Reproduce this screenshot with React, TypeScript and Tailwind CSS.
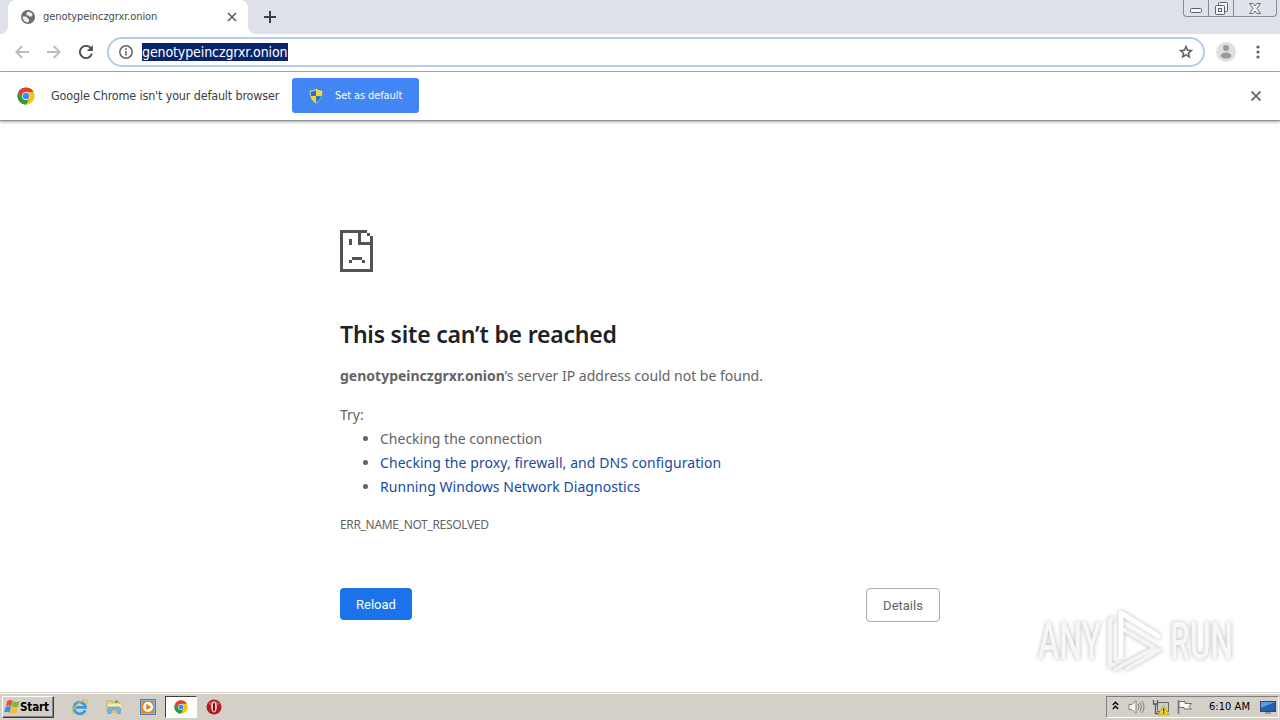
import { ReactNode } from "react"

const SANS = "font-['Noto_Sans','Open_Sans',sans-serif]"
const TAHOMA = "font-['DejaVu_Sans_Condensed','DejaVu_Sans',sans-serif]"

const ChromeLogo = ({ size }: { size: number }) => (
  <svg width={size} height={size} viewBox="0 0 48 48" className="shrink-0">
    <circle cx="24" cy="24" r="23" fill="#fbc116" />
    <path d="M24 13 H44.2 L43.9 12.5 A23 23 0 0 0 4.1 12.5 L14.5 29.5 Z" fill="#e33b2e" />
    <path d="M4.1 12.5 A23 23 0 0 0 24 47 L33.5 29.5 L24 35 L14.5 29.5 Z" fill="#2a9c48" />
    <circle cx="24" cy="24" r="10.5" fill="#fff" />
    <circle cx="24" cy="24" r="8.8" fill="#4688f1" />
  </svg>
)

const Globe = () => (
  <svg width="14" height="14" viewBox="0 0 14 14" className="shrink-0">
    <circle cx="7" cy="7" r="7" fill="#6b6d70" />
    <path d="M1.5 6.6H4.6Q6.4 6.8 6.4 8.6H8V11.2L6.8 12.6Q2 12 1.5 6.6Z" fill="#eeeff0" />
    <path d="M6 2Q9.5 1 11.7 4.3L10.8 6.4H8.2L7.2 5.2H5.4V3.6Z" fill="#eeeff0" />
  </svg>
)

const Shield = () => (
  <svg width="14" height="16" viewBox="0 0 14 16" className="shrink-0">
    <path d="M7 .5Q9.5 2.4 13.5 2.5C13.7 8 12 12.5 7 15.5C2 12.5 .3 8 .5 2.5Q4.5 2.4 7 .5Z" fill="#dfe3d8" stroke="#6c7b80" strokeWidth=".6" />
    <path d="M7 2V8H1.8L1.6 3.6Q4.5 3.5 7 2ZM7 8H12.2C11.5 11 9.8 12.9 7 14.4Z" fill="#2376c9" />
    <path d="M7 2Q9.5 3.5 12.4 3.6L12.2 8H7ZM7 8H1.8C2.5 11 4.2 12.9 7 14.4Z" fill="#f6d52b" />
  </svg>
)

const SadPage = () => (
  <svg width="33" height="42" viewBox="0 0 11 14" shapeRendering="crispEdges" fill="#535353">
    <path d="M0 0H9V1H7V4H10V3H11V14H0ZM1 1V13H10V5H6V1Z" fillRule="evenodd" />
    <path d="M9 1h1v1H9zM10 2h1v2h-1zM3 3h1v2H3zM4 9h3.34v1H4zM3 10h1v1H3zM7.34 10h1v1h-1z" />
  </svg>
)

const TabStrip = () => (
  <div className="flex h-[34px] bg-[#dee1e8]">
    <div className="w-2 bg-white">
      <div className="h-full w-full rounded-br-lg bg-[#dee1e8]" />
    </div>
    <div className="w-60 bg-[#dee1e8]">
      <div className="flex h-full items-center rounded-t-lg bg-white pr-[11px] pl-[13px]">
        <Globe />
        <span className={`${TAHOMA} mt-px ml-2 flex-1 text-[11px] tracking-[-0.08px] whitespace-nowrap text-[#45494d]`}>genotypeinczgrxr.onion</span>
        <svg width="10" height="10" viewBox="0 0 10 10" stroke="#5f6368" strokeWidth="1.7">
          <path d="M1 1L9 9M9 1L1 9" />
        </svg>
      </div>
    </div>
    <div className="w-2 bg-white">
      <div className="h-full w-full rounded-bl-lg bg-[#dee1e8]" />
    </div>
    <svg width="12" height="12" viewBox="0 0 12 12" className="mt-[11px] ml-2" stroke="#3c4043" strokeWidth="2">
      <path d="M6 0V12M0 6H12" />
    </svg>
    <div className="mr-[3px] ml-auto flex h-[17px] w-[94px] rounded-b-[4px] border border-t-0 border-[#888b93] bg-[#dfe2e9]">
      <div className="flex w-[25px] items-start justify-center border-r border-[#888b93] pt-2">
        <svg width="12" height="5" viewBox="0 0 12 5">
          <rect x=".5" y=".5" width="11" height="4" rx="1" fill="#f5f6f8" stroke="#5c6068" />
        </svg>
      </div>
      <div className="flex w-[25px] items-start justify-center border-r border-[#888b93] pt-[2px]">
        <svg width="13" height="13" viewBox="0 0 13 13" fill="#f2f3f6" stroke="#5c6068">
          <rect x="3.5" y=".5" width="9" height="9" rx="1" />
          <rect x=".5" y="3.5" width="9" height="9" rx="1" />
          <rect x="3.5" y="6.5" width="3" height="3" />
        </svg>
      </div>
      <div className="flex flex-1 items-start justify-center pt-[3px]">
        <svg width="12" height="11" viewBox="0 0 12 11" fill="#f2f3f6" stroke="#5c6068" strokeWidth=".9">
          <path d="M.6.5H4L6 3 8 .5H11.4L8 5.5 11.4 10.5H8L6 8 4 10.5H.6L4 5.5Z" />
        </svg>
      </div>
    </div>
  </div>
)

const Toolbar = () => (
  <div className="flex h-[38px] items-center border-b border-[#a9abae] bg-white pr-5 pb-px pl-[15px]">
    <svg width="14" height="14" viewBox="0 0 14 14" fill="none" stroke="#b9bbbe" strokeWidth="1.8">
      <path d="M14 7H1.5M7.3 1L1.3 7L7.3 13" />
    </svg>
    <svg width="14" height="14" viewBox="0 0 14 14" fill="none" stroke="#b9bbbe" strokeWidth="1.8" className="ml-[18px]">
      <path d="M0 7H12.5M6.7 1L12.7 7L6.7 13" />
    </svg>
    <svg width="14" height="14" viewBox="0 0 14 14" className="ml-[18px]">
      <path d="M11.8 3.2A6.1 6.1 0 1 0 12.9 8.6" fill="none" stroke="#4d5156" strokeWidth="1.9" />
      <path d="M13.9 0V6H7.9Z" fill="#4d5156" />
    </svg>
    <div className="ml-[14px] flex h-[30px] flex-1 items-center rounded-full border-2 border-[#b7cbef] bg-white pr-[9px] pl-[10px]">
      <svg width="14" height="14" viewBox="0 0 14 14" className="shrink-0">
        <circle cx="7" cy="7" r="6.2" fill="none" stroke="#5f6368" strokeWidth="1.5" />
        <path d="M6.2 6H7.8V10.5H6.2zM6.2 3.3H7.8V4.9H6.2z" fill="#5f6368" />
      </svg>
      <span className={`${TAHOMA} ml-[9px] h-[18px] w-[146px] bg-[#08246b] text-[14px] leading-[18px] tracking-[-0.1px] whitespace-nowrap text-white`}>genotypeinczgrxr.onion</span>
      <svg width="16" height="16" viewBox="0 0 24 24" className="ml-auto" fill="#54585d">
        <path d="M22 9.24l-7.19-.62L12 2 9.19 8.63 2 9.24l5.46 4.73L5.82 21 12 17.27 18.18 21l-1.63-7.03L22 9.24zM12 15.4l-3.76 2.27 1-4.28-3.32-2.88 4.38-.38L12 6.1l1.71 4.04 4.38.38-3.32 2.88 1 4.28L12 15.4z" stroke="#54585d" strokeWidth=".7" />
      </svg>
    </div>
    <svg width="20" height="20" viewBox="0 0 20 20" className="ml-[11px]">
      <circle cx="10" cy="10" r="10" fill="#dfdfe0" />
      <circle cx="10" cy="6" r="3" fill="#9a9a9c" />
      <ellipse cx="10" cy="13.6" rx="5.3" ry="3" fill="#9a9a9c" />
    </svg>
    <svg width="4" height="14" viewBox="0 0 4 14" className="ml-5" fill="#5f6368">
      <circle cx="2" cy="2" r="1.6" />
      <circle cx="2" cy="7" r="1.6" />
      <circle cx="2" cy="12" r="1.6" />
    </svg>
  </div>
)

const InfoBar = () => (
  <div className="z-10 flex h-[49px] items-center border-b border-[#8f9194] bg-white pr-[19px] pb-px pl-[17px] shadow-[0_1px_3px_rgba(0,0,0,0.35)]">
    <ChromeLogo size={18} />
    <span className={`${TAHOMA} mt-[2px] ml-4 w-[229px] text-[12.5px] tracking-[-0.17px] whitespace-nowrap text-[#3c4043]`}>Google Chrome isn't your default browser</span>
    <button className={`${TAHOMA} ml-3 flex h-[35px] w-[127px] items-center rounded-[3px] bg-[#4285f4] pl-[17px] text-[11px] tracking-[-0.1px] whitespace-nowrap text-white`}>
      <Shield />
      <span className="mt-px ml-3">Set as default</span>
    </button>
    <svg width="10" height="10" viewBox="0 0 10 10" className="mt-px ml-auto" stroke="#65686c" strokeWidth="1.9">
      <path d="M.5.5L9.5 9.5M9.5.5L.5 9.5" />
    </svg>
  </div>
)

const ErrorPage = () => (
  <main className={`${SANS} flex-1 bg-white pt-[109px] text-[14px] leading-6 whitespace-nowrap text-[#646464]`}>
    <div className="mx-auto w-[600px]">
      <SadPage />
      <h1 className="mt-[46px] text-[23px] leading-8 font-semibold tracking-[-0.2px] text-[#202124]">This site can’t be reached</h1>
      <p className="mt-[14px]">
        <b className="font-bold">genotypeinczgrxr.onion</b>’s server IP address could not be found.
      </p>
      <p className="mt-[15px]">Try:</p>
      <ul className="list-disc pl-10">
        <li>Checking the connection</li>
        <li><a className="tracking-[0.07px] text-[#1a4aa0]">Checking the proxy, firewall, and DNS configuration</a></li>
        <li><a className="tracking-[0.04px] text-[#1a4aa0]">Running Windows Network Diagnostics</a></li>
      </ul>
      <p className="mt-[14px] text-[12px] tracking-[-0.33px]">ERR_NAME_NOT_RESOLVED</p>
      <div className="mt-[51px] flex items-start justify-between font-['Roboto',sans-serif] text-[13px]">
        <button className="h-8 w-[72px] rounded-[4px] bg-[#1a73e8] pt-px text-white">Reload</button>
        <button className="h-[34px] w-[74px] rounded-[4px] border border-[#a9acb0] bg-white pt-px text-[#5f6368]">Details</button>
      </div>
    </div>
  </main>
)

const Watermark = () => (
  <div className="absolute top-[609px] left-[1038px] flex h-[66px] w-[220px] items-center font-['Roboto',sans-serif] text-[51px] leading-[66px] font-medium text-[#f7f7f7] [filter:drop-shadow(0_0_2px_#b8b8b8)]">
    <span className="w-[66px] origin-left scale-x-[0.63]">ANY</span>
    <svg width="66" height="66" viewBox="0 0 66 66" className="shrink-0" fill="none" strokeLinejoin="round">
      <path d="M10 10H6V57L12 55M17 19L51 39L10 61M22 60L57 40" stroke="#f4f4f4" strokeWidth="4" />
      <path d="M17 50V4L56 28" stroke="#fff" strokeWidth="5" />
    </svg>
    <span className="w-[88px] origin-left scale-x-[0.62]">RUN</span>
  </div>
)

const TaskItem = ({ children }: { children: ReactNode }) => (
  <div className="flex h-[22px] w-[34px] items-center justify-center">{children}</div>
)

const Taskbar = () => (
  <footer className="flex h-7 items-center border-t border-[#d4d0c8] bg-[#d4d0c8] pl-[2px] shadow-[inset_0_1px_0_#fff]">
    <div className={`${TAHOMA} mt-px flex h-[22px] w-[52px] items-center border border-t-white border-r-[#404040] border-b-[#404040] border-l-white pl-[1px] text-[11.5px] font-bold text-black shadow-[inset_-1px_-1px_0_#808080]`}>
      <svg width="16" height="16" viewBox="0 0 16 16" className="shrink-0">
        <path d="M3.4 1.8Q6 .2 8.6 1.8L7.2 7.4Q4.6 5.8 1.8 7.3Z" fill="#e8542a" />
        <path d="M9.2 2.2Q12 3.8 15.6 2.2L14.1 7.6Q11 9.2 7.8 7.6Z" fill="#7cb83c" />
        <path d="M1.6 7.9Q4.4 6.5 7 8L5.6 13.4Q3 12 .2 13.3Z" fill="#3c8bdc" />
        <path d="M7.6 8.2Q10.5 9.8 13.9 8.3L12.4 13.9Q9.2 15.4 6.1 13.9Z" fill="#f6bd2d" />
      </svg>
      <span className="mt-px tracking-[-0.1px]">Start</span>
    </div>
    <div className="mt-px ml-[9px] flex">
      <TaskItem>
        <svg width="18" height="18" viewBox="0 0 18 18" fill="none">
          <path d="M14.2 12.2A5.8 5.8 0 1 1 14.6 9.4H5" stroke="#3a9ade" strokeWidth="2.8" />
          <path d="M1.8 16C-.8 13 8 2.2 14.8 1.8 17.2 1.7 16.5 4.5 15.5 6" stroke="#e8b93c" strokeWidth="1.3" />
        </svg>
      </TaskItem>
      <TaskItem>
        <svg width="16" height="16" viewBox="0 0 16 16">
          <path d="M1 2H6L7 3.5H14V13H1Z" fill="#efd27a" stroke="#c7a54b" strokeWidth=".7" />
          <path d="M9 1.5h3v2H9z" fill="#57a957" />
          <path d="M2 5H15V9H2Z" fill="#f9eaa9" />
          <path d="M2 14.5V9.5Q2 8 3.5 8H12.5Q14.3 8 14.3 9.5V14.5H11.5V11H5V14.5Z" fill="#73bbe3" stroke="#4b91bf" strokeWidth=".6" />
        </svg>
      </TaskItem>
      <TaskItem>
        <svg width="16" height="16" viewBox="0 0 16 16">
          <rect x=".5" y=".5" width="15" height="15" fill="#7db5e4" stroke="#4b83b8" />
          <rect x="2" y="2" width="12" height="12" fill="#ee8417" />
          <circle cx="8" cy="8" r="5" fill="#fff" />
          <path d="M6.3 4.8L11.3 8L6.3 11.2Z" fill="#e8790d" />
        </svg>
      </TaskItem>
      <div className="flex h-[22px] w-8 items-center justify-center border border-t-[#404040] border-r-white border-b-white border-l-[#404040] bg-white">
        <ChromeLogo size={14} />
      </div>
      <TaskItem>
        <svg width="16" height="16" viewBox="0 0 16 16">
          <circle cx="8" cy="8" r="7.5" fill="#b01a20" />
          <path d="M2 5Q8-1 14 5Q8 8 2 5" fill="#d4555a" />
          <ellipse cx="8" cy="8" rx="2.8" ry="5.4" fill="#f6e9e9" />
          <ellipse cx="8" cy="8" rx="1.2" ry="4.6" fill="#85090e" />
        </svg>
      </TaskItem>
    </div>
    <div className={`${TAHOMA} mt-px mr-[1px] ml-auto flex h-[22px] w-[173px] items-center border border-t-[#808080] border-r-white border-b-white border-l-[#808080] pl-[5px] text-[11px] whitespace-nowrap text-black`}>
      <svg width="7" height="9" viewBox="0 0 7 9" fill="none" stroke="#000" strokeWidth="1.4" className="mb-[3px]">
        <path d="M.8 4L3.5 1.3L6.2 4M.8 8L3.5 5.3L6.2 8" />
      </svg>
      <svg width="17" height="16" viewBox="0 0 17 16" className="ml-[9px]" fill="none" stroke="#858585">
        <path d="M1 5.5H4L8 1.5V14.5L4 10.5H1Z" fill="#f5f5f5" />
        <path d="M10 5Q12 8 10 11M12 3.5Q15 8 12 12.5M14 2Q18 8 14 14" />
      </svg>
      <svg width="18" height="17" viewBox="0 0 18 17" className="ml-[7px]">
        <path d="M5.5 3.5H16.5V12.5H5.5Z" fill="#c8cdd2" stroke="#666" />
        <path d="M1.5 1V5H5.5V1M3.5 5V14.5H8" fill="none" stroke="#5a5a5a" strokeWidth="1.3" />
        <path d="M11.5 6.5L17 15.7H6Z" fill="#f7d51f" stroke="#b7980e" strokeWidth=".7" />
        <path d="M11 9.5h1.2v3H11zM11 13.3h1.2v1.2H11z" fill="#222" />
      </svg>
      <svg width="17" height="16" viewBox="0 0 17 16" className="ml-[6px]" fill="#f7f7f7" stroke="#707070">
        <path d="M2.5 15V1" strokeWidth="1.5" />
        <path d="M3 2.5H9V4.5H15.5L13 7.5 15.5 10H8V8.5H3Z" />
      </svg>
      <span className="mt-px ml-4 w-[42px] tracking-[0.05px]">6:10 AM</span>
      <svg width="16" height="14" viewBox="0 0 16 14" className="ml-[9px] shrink-0">
        <rect x=".5" y="1.5" width="15" height="10" fill="#235fae" stroke="#2c4870" />
        <path d="M1 2H15L1 8Z" fill="#5b9ae0" />
        <path d="M5 12.5h6v1H5z" fill="#567" />
      </svg>
    </div>
  </footer>
)

export default function App() {
  return (
    <div className="relative flex h-[720px] w-[1280px] flex-col overflow-hidden bg-white">
      <TabStrip />
      <Toolbar />
      <InfoBar />
      <ErrorPage />
      <Watermark />
      <Taskbar />
    </div>
  )
}
